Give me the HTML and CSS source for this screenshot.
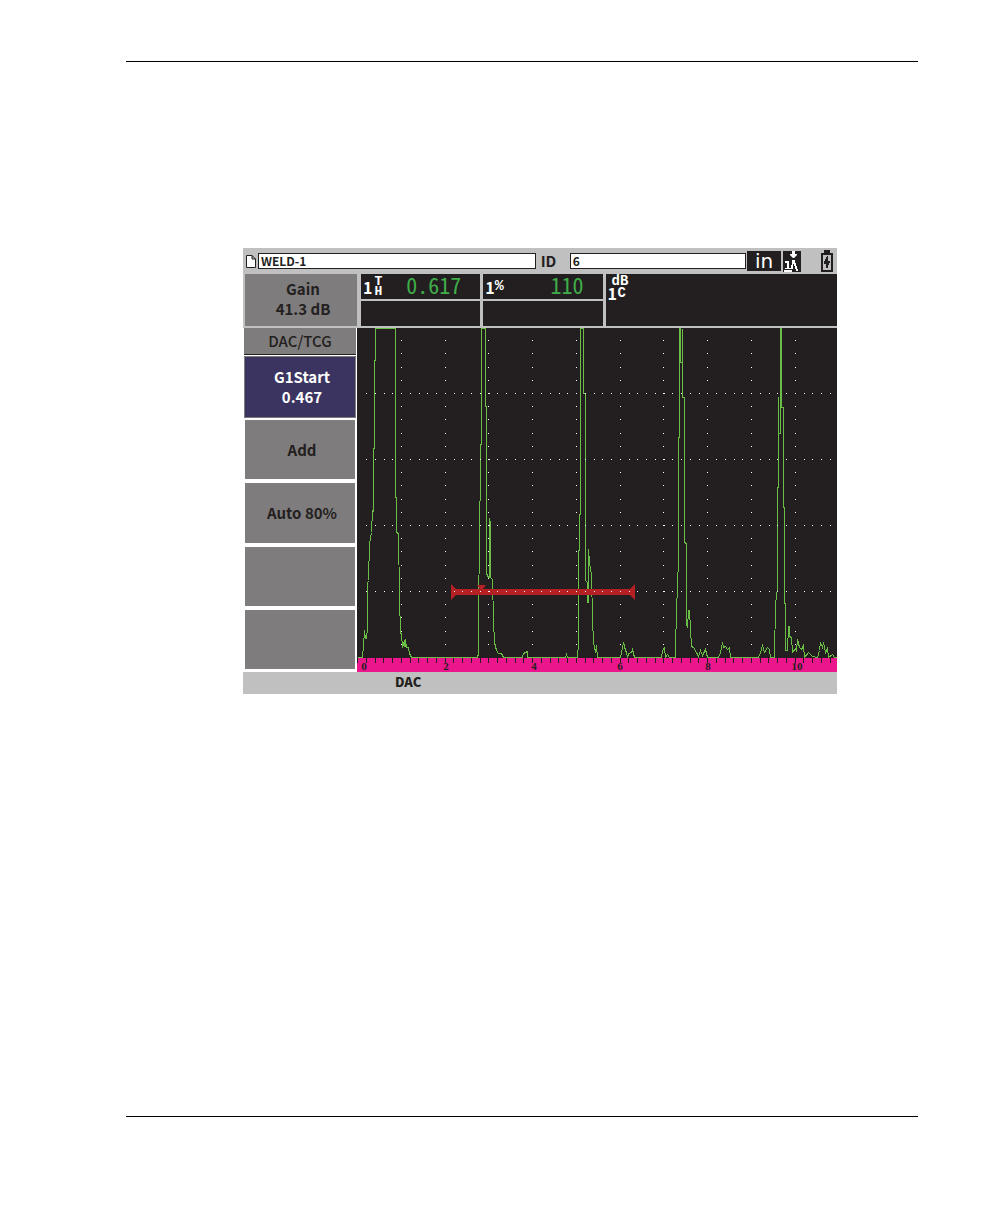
FILE: index.html
```html
<!DOCTYPE html>
<html lang="en">
<head>
<meta charset="utf-8">
<meta name="viewport" content="width=device-width, initial-scale=1">
<title>DAC/TCG</title>
<link rel="stylesheet" href="styles.css">
</head>
<body>
<main class="page">
  <section class="device">
    <header class="topbar">
      <svg class="file-icon" viewBox="0 0 10 13" aria-hidden="true"><path d="M.5.5H6L9.500 4V12.500H.5ZM6 .5V4H9.500" fill="#fff" stroke="#231f20"/></svg>
      <input class="field file-field" type="text" value="WELD-1" aria-label="File">
      <label class="id-label" for="ident">ID</label>
      <input class="field id-field" id="ident" type="text" value="6">
      <span class="unit">in</span>
      <svg class="probe-icon" viewBox="0 0 18 21" aria-hidden="true">
        <path d="M0 0H18V21H0Z" fill="#231f20"/>
        <path d="M9 0H12V3H14V4L11 7H10L7 4V3H9ZM2 10H6V17H8V18H2V17H4V12H2ZM1 19H9V21H1ZM8 18V14H9V9H12V12H13V15H14V18H15V20H13V18H12V15H11V13H10V18Z" fill="#fff"/>
      </svg>
      <svg class="battery-icon" viewBox="0 0 12 22" aria-hidden="true">
        <path d="M3 0H9V3H3ZM0 3H12V22H0ZM2 5V20H10V5Z" fill="#231f20" fill-rule="evenodd"/>
        <path d="M6 6H7V11H9V13H8V15H7V18H5V14H3V11H4V9H5V7H6Z" fill="#231f20"/>
      </svg>
    </header>
    <button class="key gain" type="button">Gain<br>41.3 dB</button>
    <div class="readings">
      <div class="reading"><span class="num">1</span><span class="stack"><span>T</span><span>H</span></span><output class="value">0.617</output></div>
      <div class="reading"><span class="num">1</span><span class="percent">%</span><output class="value">110</output></div>
      <div class="reading wide"><span class="db">dB</span><span class="num">1</span><span class="curve">C</span></div>
      <div class="reading"></div>
      <div class="reading"></div>
    </div>
    <nav class="menu" aria-label="DAC/TCG">
      <h1 class="menu-title">DAC/TCG</h1>
      <button class="key active" type="button">G1Start<br>0.467</button>
      <button class="key" type="button">Add</button>
      <button class="key" type="button">Auto 80%</button>
      <button class="key" type="button" aria-label="Empty"></button>
      <button class="key" type="button" aria-label="Empty"></button>
    </nav>
    <svg class="scan" viewBox="0 0 480 344" role="img" aria-label="A-scan">
      <rect width="480" height="344" fill="#231f20"/>
      <rect y="330" width="480" height="14" fill="#ec168c"/>
      <path class="trace" transform="translate(.5 .5)" d="M0 329H5L6 317L7 302L8 310H9L10 299V255L11 252L12 215L14 204L15 182L16 183V120H17V32H18V0H38V169H39V204L41 205L42 269L43 304L44 306L45 319L47 312V318L48 318V311L49 319H51L52 325L54 329H120L121 325L122 173L123 172V116H124V0H128V78H129V245L131 249H132V190L133 195V249L135 251L136 292L137 314L139 322L141 325H144L146 329H165L166 325L170 323V329H208L209 326L210 329H220L221 314V222H222V186H223V0H226V65H228V252L230 254V274H231V221L232 234L234 247L235 290L236 314L238 324L239 317L240 329H263L265 319L266 314L268 322L269 324L270 329L271 325L274 324L275 321L277 329H304L305 322L307 319L308 329L310 326L312 329H318V317L320 254L321 234V109H322V0H323V34H325V0V69H327V214L329 215V295L330 299L331 282H332L334 318L336 319L339 324L341 328L343 322L345 327L348 321L350 329H361L363 324L365 314L366 319L368 318L370 321L372 319L373 329H401L403 324L405 317L407 324L410 319L412 321L413 329H417L418 275L420 260V159H421V68V105H423V0H424V79H426L427 275H428V322H430L431 298H432V308L434 309L435 324L438 320L439 322L440 311L442 319L444 321L446 317L447 329L451 324L455 328L460 329L462 322L463 314L465 319L466 314L468 324L470 320L471 329L475 326L477 329H480"/>
      <path class="gate" d="M94 256L99 261H123L120 257H129L126 261H273L278 256V272L273 267H99L94 272Z"/>
      <path class="dots dots-v" d="M44 12V329M88 12V329M131 12V329M175 12V329M219 12V329M263 12V329M306 12V329M350 12V329M394 12V329M438 12V329"/>
      <path class="dots dots-h" d="M9 65H480M9 131H480M9 197H480M9 263H480"/>
      <path class="ticks" d="M0 332H480"/>
      <g class="scale"><text x="7" y="342">0</text><text x="89" y="342">2</text><text x="177" y="342">4</text><text x="263" y="342">6</text><text x="351" y="342">8</text><text x="440" y="342">10</text></g>
    </svg>
    <footer class="status">DAC</footer>
  </section>
</main>
</body>
</html>
```
FILE: styles.css
```css
* { box-sizing: border-box; }

body {
  margin: 0;
  background: #fff;
  color: #231f20;
  font-family: "Noto Sans CJK SC", "Noto Sans", sans-serif;
}

.page {
  margin: 61px 90px 107px 126px;
  padding: 186px 81px 422px 117px;
  border: solid #000;
  border-width: 1px 0;
}

.device {
  display: grid;
  grid-template-columns: 114px 1fr;
  grid-template-rows: 26px 54px auto 22px;
  background: #c0c0c0;
}

.topbar {
  grid-column: 1 / -1;
  display: flex;
  align-items: center;
  padding: 0 4px 0 3px;
}

.file-icon { width: 10px; height: 13px; margin-right: 2px; }

.field {
  height: 16px;
  min-width: 0;
  padding: 0 2px 2px;
  border: 1px solid #231f20;
  border-radius: 0;
  background: #fff;
  color: #231f20;
  font: bold 12px/12px "Noto Sans CJK SC", "Noto Sans", sans-serif;
}

.file-field { flex: 279 1 0; }
.id-field { flex: 175 1 0; }

.id-label {
  width: 34px;
  padding-left: 5px;
  font: bold 15px/20px "Noto Sans CJK SC", sans-serif;
}

.unit {
  width: 34px;
  margin: 0 2px 0 1px;
  background: #231f20;
  color: #fff;
  font: 20px/20px "DejaVu Sans", sans-serif;
  text-align: center;
}

.probe-icon { width: 18px; height: 21px; margin-right: 20px; }
.battery-icon { width: 12px; height: 22px; }

.key {
  padding: 0 0 0 4px;
  border: 0;
  background: #7f7c7d;
  color: #231f20;
  font: bold 15px/20px "Noto Sans CJK SC", "Noto Sans", sans-serif;
  text-align: center;
}

.gain { margin: 0 0 2px 2px; padding-bottom: 2px; }

.readings {
  display: grid;
  grid-template-columns: 119fr 119fr 231fr;
  grid-template-rows: 1fr 1fr;
  gap: 2px 3px;
  padding: 0 0 2px 4px;
}

.reading {
  display: flex;
  align-items: center;
  padding: 0 19px 0 2px;
  background: #231f20;
  color: #fff;
}

.num { font: bold 16px/16px "Noto Sans CJK SC", sans-serif; }

.stack {
  display: grid;
  margin-left: 2px;
  font: bold 13px/10px "Liberation Mono", monospace;
}

.percent { font: bold 15px/20px "Liberation Mono", monospace; }

.value {
  height: 25px;
  margin-left: auto;
  color: #3fae49;
  font: 22px/20px "Noto Sans Mono CJK SC", "DejaVu Sans Mono", monospace;
}

.wide {
  grid-row: 1 / 3;
  grid-column: 3;
  display: grid;
  grid-template-columns: 10px 10px;
  grid-template-rows: 10px 14px;
  align-content: start;
  align-items: center;
  padding-top: 2px;
}

.db { grid-column: 1 / 3; padding-left: 4px; font: bold 14px/10px "Liberation Mono", monospace; }
.curve { font: bold 14px/12px "Liberation Mono", monospace; }

.menu {
  display: grid;
  grid-template-rows: 24px 60px repeat(4, 1fr);
  gap: 4px;
  padding: 0 2px 3px;
  background: #fff;
}

.menu-title {
  margin: 0 -1px -3px;
  border-bottom: 1px solid #231f20;
  background: #7f7c7d;
  font: 500 15px/25px "Noto Sans CJK SC", "Noto Sans", sans-serif;
  text-align: center;
}

.menu .active {
  margin: 0 -1px -2px;
  border: 1px solid #7f7c7d;
  background: #3b3460;
  color: #fff;
}

.scan { display: block; width: 100%; }

.trace { fill: none; stroke: #6abd45; stroke-width: 1; shape-rendering: crispEdges; }
.gate { fill: #b52025; }
.dots { fill: none; stroke: #fff; stroke-width: 1; shape-rendering: crispEdges; }
.dots-v { stroke-dasharray: 1 12 1 13 1 12 1 12 1 12; }
.dots-h { stroke-dasharray: 1 7.75; }
.ticks { stroke: #231f20; stroke-width: 5; stroke-dasharray: 1 7.75; shape-rendering: crispEdges; }
.scale { fill: #231f20; font: bold 11px "Liberation Serif", serif; text-anchor: middle; }

.status {
  grid-column: 1 / -1;
  padding-left: 152px;
  font: 900 13px/20px "Noto Sans CJK SC", sans-serif;
}
```
